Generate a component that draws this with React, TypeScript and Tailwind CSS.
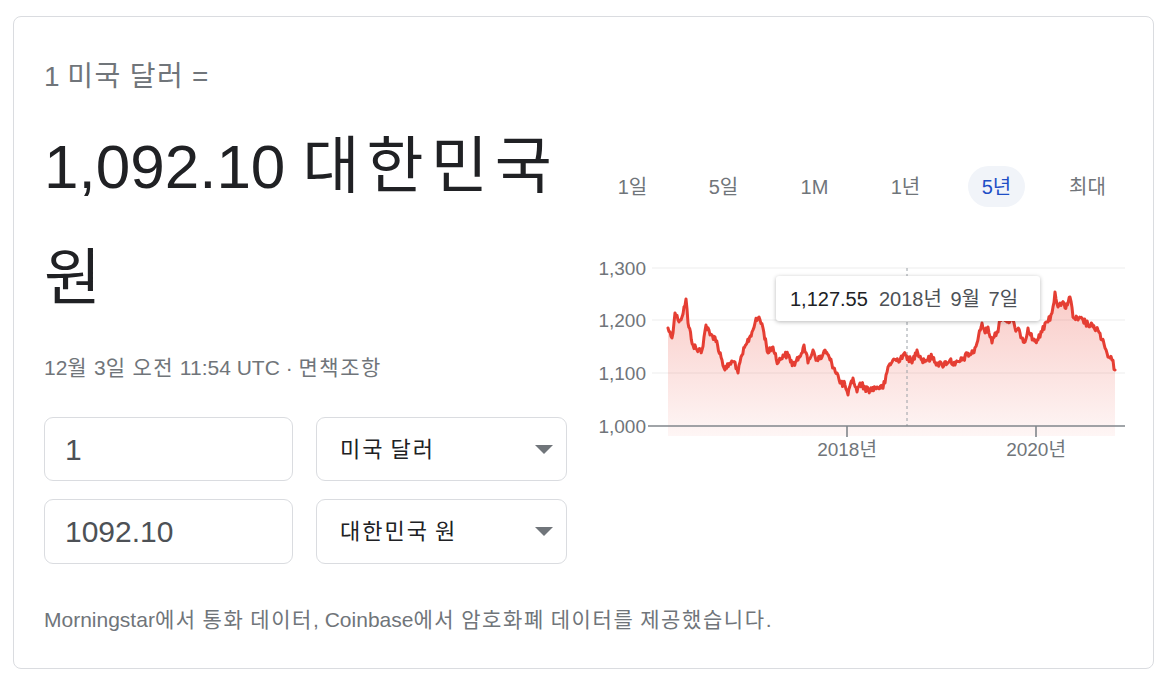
import React from "react";

const keyPts: [number, number][] = [
  [668, 328], [672, 338], [675, 313], [678, 320], [682, 317], [686, 299], [688, 323],
  [693, 345], [697, 350], [702, 350], [706, 325], [710, 335], [715, 337], [722, 360],
  [725, 370], [730, 363], [735, 362], [738, 373], [742, 355], [747, 343], [752, 332],
  [755, 323], [759, 317], [763, 328], [768, 353], [773, 347], [778, 363], [783, 355],
  [788, 355], [793, 365], [798, 360], [804, 345], [808, 363], [813, 350], [817, 360],
  [822, 357], [825, 350], [830, 360], [837, 373], [840, 383], [845, 385], [848, 395],
  [853, 378], [857, 392], [860, 383], [865, 388], [870, 390], [877, 387], [882, 388],
  [885, 383], [888, 367], [893, 360], [898, 360], [903, 355], [908, 357], [912, 363],
  [917, 350], [922, 360], [927, 360], [932, 357], [937, 363], [942, 365], [950, 360],
  [955, 365], [962, 360], [967, 355], [973, 353], [977, 343], [982, 323], [985, 333],
  [988, 327], [992, 343], [995, 333], [998, 332], [1000, 317], [1004, 318], [1007, 322],
  [1012, 320], [1015, 328], [1020, 333], [1025, 342], [1028, 328], [1033, 340],
  [1038, 340], [1042, 332], [1045, 323], [1048, 322], [1052, 313], [1055, 292],
  [1058, 307], [1062, 303], [1065, 308], [1070, 297], [1073, 317], [1078, 320],
  [1083, 320], [1088, 325], [1093, 327], [1098, 330], [1102, 340], [1105, 348],
  [1108, 357], [1112, 360], [1115, 370],
];

function buildPoints(): [number, number][] {
  let seed = 12345;
  const rand = () => {
    seed = (seed * 1103515245 + 12345) & 0x7fffffff;
    return seed / 0x7fffffff;
  };
  const out: [number, number][] = [];
  for (let i = 0; i < keyPts.length - 1; i++) {
    const [x1, y1] = keyPts[i];
    const [x2, y2] = keyPts[i + 1];
    const steps = Math.max(1, Math.round((x2 - x1) / 0.9));
    for (let s = 0; s < steps; s++) {
      const t = s / steps;
      const x = x1 + (x2 - x1) * t;
      let y = y1 + (y2 - y1) * t;
      if (s !== 0) y += (rand() * 2 - 1) * 3.4;
      out.push([x, y]);
    }
  }
  out.push(keyPts[keyPts.length - 1]);
  return out;
}

const pts = buildPoints();
const linePath = pts.map((p, i) => `${i === 0 ? "M" : "L"}${p[0].toFixed(1)},${p[1].toFixed(1)}`).join(" ");
const areaPath = `${linePath} L${pts[pts.length - 1][0].toFixed(1)},436 L${pts[0][0].toFixed(1)},436 Z`;

const tabs = ["1일", "5일", "1M", "1년", "5년", "최대"];

// Wraps runs of Hangul in a span with extra tracking (the reference's Korean face is wider).
function K({ text, k }: { text: string; k: string }) {
  const parts = text.split(/([\uac00-\ud7a3]+)/);
  return (
    <>
      {parts.map((p, i) =>
        /[\uac00-\ud7a3]/.test(p) ? (
          <span key={i} className={k}>
            {p}
          </span>
        ) : (
          <React.Fragment key={i}>{p}</React.Fragment>
        )
      )}
    </>
  );
}

function Triangle() {
  return (
    <svg width="18" height="9" viewBox="0 0 18 9">
      <polygon points="0,0 18,0 9,9" fill="#70757a" />
    </svg>
  );
}

export default function App() {
  return (
    <div className="w-[1166px] h-[682px] bg-white pt-4 pl-[13px] font-['Liberation_Sans','Noto_Sans_CJK_KR',sans-serif]">
      <div className="w-[1141px] h-[653px] border border-[#dadce0] rounded-[8px] pt-[42px] pl-[30px] flex flex-col">
        <div className="flex gap-[20px]">
          <div className="w-[523px] flex flex-col">
            <div className="text-[28px] leading-[36px] text-[#70757a]">
              <K text="1 미국 달러 =" k="tracking-[1.5px]" />
            </div>
            <div className="mt-[16px] text-[62px] leading-[112px] text-[#202124]">
              <K text="1,092.10 대한민국 원" k="tracking-[7px]" />
            </div>
            <div className="mt-[19px] text-[21px] leading-[28px] text-[#70757a]">
              <K text="12월 3일 오전 11:54 UTC · 면책조항" k="tracking-[1.5px]" />
            </div>
            <div className="mt-[35px] grid grid-cols-[249px_251px] gap-x-[23px] gap-y-[18px]">
              <div className="h-[64px] border border-[#dadce0] rounded-[9px] flex items-center pl-[20px] text-[30px] text-[#4d5156]">1</div>
              <div className="h-[64px] border border-[#dadce0] rounded-[9px] flex items-center justify-between pl-[23px] pr-[13px] text-[22px] text-[#202124]">
                <span>
                  <K text="미국 달러" k="tracking-[2px]" />
                </span>
                <Triangle />
              </div>
              <div className="h-[65px] border border-[#dadce0] rounded-[9px] flex items-center pl-[20px] text-[30px] text-[#4d5156]">1092.10</div>
              <div className="h-[65px] border border-[#dadce0] rounded-[9px] flex items-center justify-between pl-[23px] pr-[13px] text-[22px] text-[#202124]">
                <span>
                  <K text="대한민국 원" k="tracking-[2px]" />
                </span>
                <Triangle />
              </div>
            </div>
          </div>
          <div className="w-[546px] flex flex-col">
            <div className="mt-[107px] flex h-[41px]">
              {tabs.map((t) => (
                <div key={t} className="flex-1 flex justify-center">
                  <span
                    className={
                      t === "5년"
                        ? "px-[14px] h-[41px] rounded-full flex items-center text-[20px] bg-[#f1f4f9] text-[#1f4fc6]"
                        : "px-[14px] h-[41px] rounded-full flex items-center text-[20px] text-[#70757a]"
                    }
                  >
                    {t}
                  </span>
                </div>
              ))}
            </div>
            <div className="relative mt-[48px] h-[210px]">
              <svg width="546" height="210" viewBox="587 255 546 210" className="block">
                <defs>
                  <linearGradient id="fillg" x1="0" y1="290" x2="0" y2="436" gradientUnits="userSpaceOnUse">
                    <stop offset="0" stopColor="#ea4335" stopOpacity="0.28" />
                    <stop offset="1" stopColor="#ea4335" stopOpacity="0.05" />
                  </linearGradient>
                </defs>
                {[268, 320, 373].map((y) => (
                  <line key={y} x1="652" x2="1125" y1={y} y2={y} stroke="#ededed" strokeWidth="1" />
                ))}
                <path d={areaPath} fill="url(#fillg)" />
                <line x1="907" x2="907" y1="268" y2="426" stroke="#9aa0a6" strokeWidth="1" strokeDasharray="3 3" />
                <path d={linePath} fill="none" stroke="#e53e33" strokeWidth="3" strokeLinejoin="round" strokeLinecap="round" />
                <line x1="648" x2="1125" y1="426" y2="426" stroke="#80868b" strokeWidth="1.6" />
                <line x1="847" x2="847" y1="426" y2="437" stroke="#80868b" strokeWidth="1.6" />
                <line x1="1036" x2="1036" y1="426" y2="437" stroke="#80868b" strokeWidth="1.6" />
                {[
                  ["1,300", 268],
                  ["1,200", 320],
                  ["1,100", 373],
                  ["1,000", 426],
                ].map(([l, y]) => (
                  <text key={l as string} x="646" y={(y as number) + 7} textAnchor="end" fontSize="19" fill="#70757a">
                    {l}
                  </text>
                ))}
                <text x="847" y="456" textAnchor="middle" fontSize="19" fill="#70757a">2018년</text>
                <text x="1036" y="456" textAnchor="middle" fontSize="19" fill="#70757a">2020년</text>
              </svg>
              <div className="absolute left-[189px] top-[21px] w-[264px] h-[45px] bg-white rounded-[3px] shadow-[0_1px_4px_rgba(0,0,0,0.28)] flex items-center pl-[14px] text-[20px] whitespace-pre">
                <span className="text-[#202124]">1,127.55</span>
                <span className="text-[#4d5156]">
                  <K text="  2018년 9월 7일" k="tracking-[3px]" />
                </span>
              </div>
            </div>
          </div>
        </div>
        <div className="mt-[42px] text-[21px] leading-[28px] text-[#70757a]">
          <K text="Morningstar에서 통화 데이터, Coinbase에서 암호화폐 데이터를 제공했습니다." k="tracking-[1.6px]" />
        </div>
      </div>
    </div>
  );
}
